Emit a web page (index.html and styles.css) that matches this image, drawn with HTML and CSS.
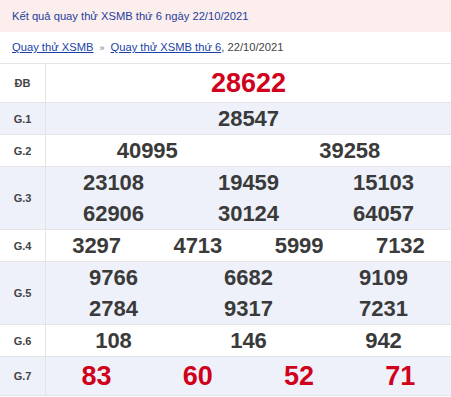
FILE: index.html
```html
<!DOCTYPE html>
<html lang="vi">
<head>
<meta charset="utf-8">
<link rel="stylesheet" href="styles.css">
</head>
<body>
<div class="title">Kết quả quay thử XSMB thứ 6 ngày 22/10/2021</div>
<div class="crumbs"><a href="#">Quay thử XSMB</a><span class="sep">»</span><a href="#">Quay thử XSMB thứ 6</a>, 22/10/2021</div>
<div class="results">
  <div class="row tall">
    <div class="label">ĐB</div>
    <div class="nums c1 red"><span>28622</span></div>
  </div>
  <div class="row alt">
    <div class="label">G.1</div>
    <div class="nums c1"><span>28547</span></div>
  </div>
  <div class="row">
    <div class="label">G.2</div>
    <div class="nums c2"><span>40995</span><span>39258</span></div>
  </div>
  <div class="row alt">
    <div class="label">G.3</div>
    <div class="nums c3"><span>23108</span><span>19459</span><span>15103</span><span>62906</span><span>30124</span><span>64057</span></div>
  </div>
  <div class="row">
    <div class="label">G.4</div>
    <div class="nums c4"><span>3297</span><span>4713</span><span>5999</span><span>7132</span></div>
  </div>
  <div class="row alt">
    <div class="label">G.5</div>
    <div class="nums c3"><span>9766</span><span>6682</span><span>9109</span><span>2784</span><span>9317</span><span>7231</span></div>
  </div>
  <div class="row">
    <div class="label">G.6</div>
    <div class="nums c3"><span>108</span><span>146</span><span>942</span></div>
  </div>
  <div class="row alt tall">
    <div class="label">G.7</div>
    <div class="nums c4 red"><span>83</span><span>60</span><span>52</span><span>71</span></div>
  </div>
</div>
</body>
</html>
```

FILE: styles.css
```css
body {
  margin: 0;
  font-family: "Liberation Sans", Arial, sans-serif;
  background: #fff;
  color: #333;
}
.title {
  height: 32px;
  line-height: 32px;
  padding-left: 12px;
  background: #fdeeee;
  color: #23409a;
  font-size: 11.2px;
}
.crumbs {
  height: 31px;
  line-height: 30px;
  padding-left: 12px;
  font-size: 11.2px;
  color: #444;
}
.crumbs a {
  color: #1a3fa6;
  text-decoration: underline;
}
.sep {
  color: #777;
  font-size: 9px;
  margin: 0 6px;
}
.results {
  border-top: 1px solid #e4e4e4;
}
.row {
  display: flex;
  border-bottom: 1px solid #e4e4e4;
  background: #fff;
}
.row.alt {
  background: #eef1f9;
}
.label {
  width: 45px;
  flex: none;
  border-right: 1px solid #e4e4e4;
  display: flex;
  align-items: center;
  justify-content: center;
  font-size: 11px;
  font-weight: bold;
  color: #444;
}
.nums {
  flex: 1;
  display: grid;
  font-weight: bold;
  font-size: 22px;
  color: #3a3a3a;
}
.nums span {
  height: 31px;
  line-height: 31px;
  text-align: center;
}
.c1 { grid-template-columns: 1fr; }
.c2 { grid-template-columns: repeat(2, 1fr); }
.c3 { grid-template-columns: repeat(3, 1fr); }
.c4 { grid-template-columns: repeat(4, 1fr); }
.row.tall .nums span {
  height: 38px;
  line-height: 38px;
}
.nums.red {
  color: #d0021b;
  font-size: 27px;
}
```
